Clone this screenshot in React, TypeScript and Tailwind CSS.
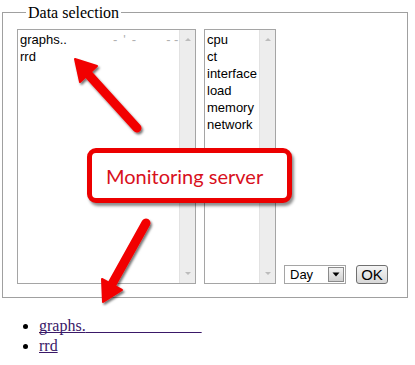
import React from 'react';

const sans = { fontFamily: '"Liberation Sans", Arial, sans-serif' };
const serif = { fontFamily: '"Liberation Serif", "Times New Roman", serif' };

function ScrollTrack() {
  return (
    <div className="flex w-[16px] flex-col justify-between border-l border-[#e2e2e2] bg-[#ededed] py-[6px]">
      <svg width="16" height="6" viewBox="0 0 16 6" className="opacity-70">
        <path d="M5 5 L8 2 L11 5 Z" fill="#a8a8a8" />
      </svg>
      <svg width="16" height="6" viewBox="0 0 16 6" className="opacity-70">
        <path d="M5 1 L8 4 L11 1 Z" fill="#a8a8a8" />
      </svg>
    </div>
  );
}

function ListBox({ width, children }: { width: string; children: React.ReactNode }) {
  return (
    <div className={`flex h-[255px] ${width} border border-[#a5a5a5] bg-white`}>
      <div className="flex-1 overflow-hidden px-[2px] pt-[1px] text-[13px] leading-[17px] text-black" style={sans}>
        {children}
      </div>
      <ScrollTrack />
    </div>
  );
}

function Arrows() {
  return (
    <svg className="pointer-events-none absolute left-0 top-0" width="415" height="365" viewBox="0 0 415 365">
      <defs>
        <filter id="shadow" x="-20%" y="-20%" width="140%" height="140%">
          <feDropShadow dx="1.5" dy="2" stdDeviation="1.2" floodColor="#000" floodOpacity="0.55" />
        </filter>
      </defs>
      <g filter="url(#shadow)" fill="#f20000" stroke="#f20000">
        {/* upper arrow, points to the host list */}
        <line x1="137" y1="128" x2="88" y2="74" strokeWidth="9" strokeLinecap="round" />
        <polygon points="75,59 97,66 80,82" strokeWidth="2" strokeLinejoin="round" />
        {/* lower arrow, points to the link list */}
        <line x1="146" y1="223" x2="112" y2="284" strokeWidth="9" strokeLinecap="round" />
        <polygon points="103,302 122,290 102,279" strokeWidth="2" strokeLinejoin="round" />
      </g>
    </svg>
  );
}

export default function App() {
  const hidden = '\u00a0'.repeat(29);
  return (
    <div className="relative h-[365px] w-[415px] overflow-hidden bg-white">
      <div className="px-[2px] pt-[3px]">
        <fieldset className="w-[406px] border border-[#a0a0a0] px-[14px] pb-[13px] pt-[7px]">
          <legend className="ml-[9px] px-[2px] text-[16px] leading-[19px] text-black" style={serif}>
            Data selection
          </legend>
          <div className="flex items-end">
            <ListBox width="w-[179px]">
              <div className="whitespace-nowrap">
                graphs..
                <span className="ml-[46px] text-[#b0b0b0]">-</span>
                <span className="ml-[6px] text-[#b0b0b0]">'</span>
                <span className="ml-[6px] text-[#b0b0b0]">-</span>
                <span className="ml-[30px] text-[#b0b0b0]">- -</span>
              </div>
              <div>rrd</div>
            </ListBox>
            <div className="ml-[8px]">
              <ListBox width="w-[72px]">
                <div>cpu</div>
                <div>ct</div>
                <div>interface</div>
                <div>load</div>
                <div>memory</div>
                <div>network</div>
              </ListBox>
            </div>
            <div className="ml-[8px] flex h-[19px] w-[62px] items-center border border-[#a5a5a5] bg-white pl-[5px] pr-[1px] text-[13px] text-black" style={sans}>
              <span className="flex-1">Day</span>
              <span className="flex h-[15px] w-[16px] items-center justify-center border border-[#8a8a8a] bg-gradient-to-b from-[#f2f2f2] to-[#cfcfcf]">
                <svg width="8" height="5" viewBox="0 0 8 5">
                  <path d="M0.5 0.5 L7.5 0.5 L4 4.5 Z" fill="#000" />
                </svg>
              </span>
            </div>
            <button className="ml-[10px] flex h-[19px] w-[32px] items-center justify-center rounded-[3px] border border-[#707070] bg-gradient-to-b from-[#f4f4f4] to-[#d8d8d8] text-[15px] leading-none text-black" style={sans}>
              OK
            </button>
          </div>
        </fieldset>
        <ul className="mt-[18px] list-disc pl-[37px] text-[16px] leading-[20px]" style={serif}>
          <li>
            <a href="#" className="whitespace-nowrap text-[#3a1868] underline decoration-[#3a1868] [text-decoration-skip-ink:none]">
              graphs.{hidden}
            </a>
          </li>
          <li>
            <a href="#" className="text-[#3a1868] underline decoration-[#3a1868]">
              rrd
            </a>
          </li>
        </ul>
      </div>
      <Arrows />
      <div className="absolute left-[87px] top-[148px] flex h-[55px] w-[205px] items-center rounded-[9px] border-[5px] border-[#ec0000] bg-white pl-[14px] shadow-[2px_3px_3px_rgba(0,0,0,0.45)]">
        <span className="text-[20px] leading-none text-[#d8101c]" style={{ fontFamily: 'Lato, "Open Sans", sans-serif' }}>
          Monitoring server
        </span>
      </div>
    </div>
  );
}
